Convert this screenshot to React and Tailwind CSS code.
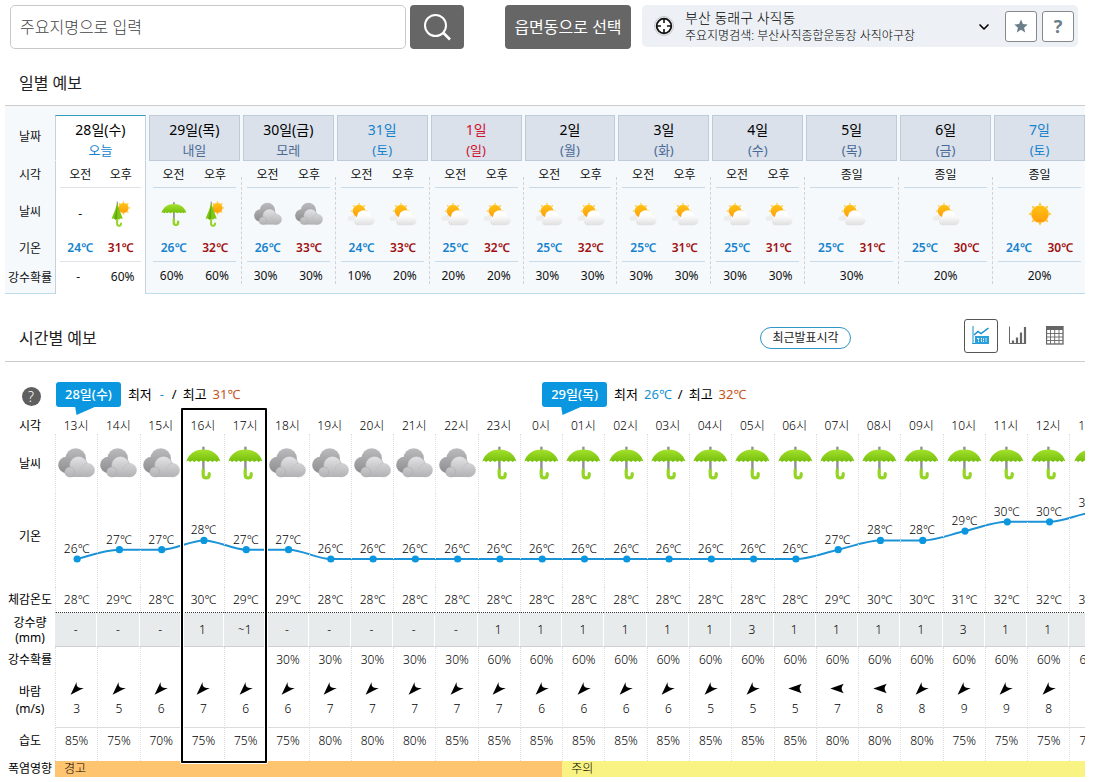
import { useState } from 'react'
import clsx from 'clsx'
import { ChevronDown } from 'lucide-react'

const days = [
  { date: '28일(수)', sub: '오늘', today: true, icons: [null, 'umbrellaSun'], temps: [24, 31], rain: ['-', '60%'] },
  { date: '29일(목)', sub: '내일', icons: ['umbrella', 'umbrellaSun'], temps: [26, 32], rain: ['60%', '60%'] },
  { date: '30일(금)', sub: '모레', icons: ['cloud', 'cloud'], temps: [26, 33], rain: ['30%', '30%'] },
  { date: '31일', sub: '(토)', tone: 'sat', icons: ['partly', 'partly'], temps: [24, 33], rain: ['10%', '20%'] },
  { date: '1일', sub: '(일)', tone: 'sun', icons: ['partly', 'partly'], temps: [25, 32], rain: ['20%', '20%'] },
  { date: '2일', sub: '(월)', icons: ['partly', 'partly'], temps: [25, 32], rain: ['30%', '30%'] },
  { date: '3일', sub: '(화)', icons: ['partly', 'partly'], temps: [25, 31], rain: ['30%', '30%'] },
  { date: '4일', sub: '(수)', icons: ['partly', 'partly'], temps: [25, 31], rain: ['30%', '30%'] },
  { date: '5일', sub: '(목)', icons: ['partly'], temps: [25, 31], rain: ['30%'] },
  { date: '6일', sub: '(금)', icons: ['partly'], temps: [25, 30], rain: ['20%'] },
  { date: '7일', sub: '(토)', tone: 'sat', icons: ['sun'], temps: [24, 30], rain: ['20%'] },
]

// hour, icon, temp, feels like, rain (mm), rain chance, wind direction, wind speed, humidity
const hours = [
  ['13', 'cloud', 26, 28, '-', '', 'sw', 3, 85],
  ['14', 'cloud', 27, 29, '-', '', 'sw', 5, 75],
  ['15', 'cloud', 27, 28, '-', '', 'sw', 6, 70],
  ['16', 'umbrella', 28, 30, '1', '', 'sw', 7, 75],
  ['17', 'umbrella', 27, 29, '~1', '', 'sw', 6, 75],
  ['18', 'cloud', 27, 29, '-', '30%', 'sw', 6, 75],
  ['19', 'cloud', 26, 28, '-', '30%', 'sw', 7, 80],
  ['20', 'cloud', 26, 28, '-', '30%', 'sw', 7, 80],
  ['21', 'cloud', 26, 28, '-', '30%', 'sw', 7, 80],
  ['22', 'cloud', 26, 28, '-', '30%', 'sw', 7, 85],
  ['23', 'umbrella', 26, 28, '1', '60%', 'sw', 7, 85],
  ['0', 'umbrella', 26, 28, '1', '60%', 'sw', 6, 85],
  ['01', 'umbrella', 26, 28, '1', '60%', 'sw', 6, 85],
  ['02', 'umbrella', 26, 28, '1', '60%', 'sw', 6, 85],
  ['03', 'umbrella', 26, 28, '1', '60%', 'sw', 6, 85],
  ['04', 'umbrella', 26, 28, '1', '60%', 'sw', 5, 85],
  ['05', 'umbrella', 26, 28, '3', '60%', 'sw', 5, 85],
  ['06', 'umbrella', 26, 28, '1', '60%', 'w', 5, 85],
  ['07', 'umbrella', 27, 29, '1', '60%', 'w', 7, 80],
  ['08', 'umbrella', 28, 30, '1', '60%', 'w', 8, 80],
  ['09', 'umbrella', 28, 30, '1', '60%', 'sw', 8, 80],
  ['10', 'umbrella', 29, 31, '3', '60%', 'sw', 9, 75],
  ['11', 'umbrella', 30, 32, '1', '60%', 'sw', 9, 75],
  ['12', 'umbrella', 30, 32, '1', '60%', 'sw', 8, 75],
  ['13', 'umbrella', 31, 33, '1', '60%', '', '', 75],
].map(([hour, icon, temp, feels, mm, chance, dir, wind, humidity]) => ({
  hour, icon, temp, feels, mm, chance, dir, wind, humidity,
}))

const CHART_W = 1057
const CHART_H = 93
const tempY = (t) => 65 - (t - 26) * 9.3

const points = hours.map((h, i) => ({ x: ((i + 0.5) * CHART_W) / hours.length, y: tempY(h.temp) }))

// monotone cubic through the hourly points
const linePath = (() => {
  const step = CHART_W / hours.length
  const slopes = points.slice(1).map((p, i) => p.y - points[i].y)
  const tangents = points.map((_, i) => {
    if (i === 0) return slopes[0] * 1.2
    if (i === points.length - 1) return slopes[i - 1] * 0.5
    return slopes[i - 1] * slopes[i] <= 0 ? 0 : (slopes[i - 1] + slopes[i]) / 2
  })
  return points.reduce((d, p, i) => {
    if (i === 0) return `M${p.x} ${p.y}`
    const prev = points[i - 1]
    return `${d} C${prev.x + step / 3} ${prev.y + tangents[i - 1] / 3} ${p.x - step / 3} ${p.y - tangents[i] / 3} ${p.x} ${p.y}`
  }, '')
})()

const RAYS = [0, 45, 90, 135, 180, 225, 270, 315]

function Gradients() {
  return (
    <svg className="absolute w-0 h-0" aria-hidden="true">
      <defs>
        <linearGradient id="cloudBack" gradientUnits="userSpaceOnUse" x1="0" y1="0" x2="0" y2="26">
          <stop offset="0" stopColor="#bcbcbe" />
          <stop offset="1" stopColor="#8c8c8f" />
        </linearGradient>
        <linearGradient id="cloudFront" gradientUnits="userSpaceOnUse" x1="0" y1="8" x2="0" y2="29">
          <stop offset="0" stopColor="#e4e4e6" />
          <stop offset="1" stopColor="#b2b2b4" />
        </linearGradient>
        <linearGradient id="cloudWhite" gradientUnits="userSpaceOnUse" x1="0" y1="8" x2="0" y2="23">
          <stop offset="0.3" stopColor="#ffffff" />
          <stop offset="1" stopColor="#dedede" />
        </linearGradient>
        <linearGradient id="canopy" x1="0" y1="0" x2="0" y2="1">
          <stop offset="0" stopColor="#a4e22c" />
          <stop offset="1" stopColor="#74bd0c" />
        </linearGradient>
        <linearGradient id="sunDisc" x1="0" y1="0" x2="0" y2="1">
          <stop offset="0" stopColor="#ffc416" />
          <stop offset="1" stopColor="#ff9d0a" />
        </linearGradient>
      </defs>
    </svg>
  )
}

function SunShape({ cx, cy, r, ray }) {
  return (
    <g>
      {RAYS.map((a) => (
        <path
          key={a}
          d={`M${cx - ray} ${cy - r - 0.2} L${cx} ${cy - r - ray * 2} L${cx + ray} ${cy - r - 0.2} Z`}
          fill="#ffc93a"
          transform={`rotate(${a} ${cx} ${cy})`}
        />
      ))}
      <circle cx={cx} cy={cy} r={r} fill="url(#sunDisc)" />
    </g>
  )
}

function CloudIcon({ className }) {
  return (
    <svg viewBox="0 0 37 30" className={className} role="img" aria-label="흐림">
      <g fill="url(#cloudBack)">
        <circle cx="8.4" cy="17" r="8.2" />
        <circle cx="17.7" cy="10.4" r="10.2" />
      </g>
      <g fill="url(#cloudFront)">
        <circle cx="20.5" cy="17.3" r="9" stroke="#a6a6a9" strokeWidth="0.5" />
        <circle cx="29.7" cy="22.2" r="6.8" stroke="#b4b4b6" strokeWidth="0.4" />
        <path d="M12 22 H30 V29 H12 Z" />
        <circle cx="11.7" cy="24" r="5" stroke="#a6a6a9" strokeWidth="0.5" />
      </g>
    </svg>
  )
}

function UmbrellaIcon({ className }) {
  return (
    <svg viewBox="0 0 35 33" className={className} role="img" aria-label="비">
      <path d="M17.4 0.2 V24" stroke="#8f9094" strokeWidth="2.4" />
      <path
        d="M0.3 15 C2.5 7.5 9 2.9 17.4 2.9 C25.8 2.9 32.3 7.5 34.5 15 L32.6 14 L30.7 15.4 L28.6 14 L26.5 15.4 L24.2 14 L22 15.6 L19.7 14 L17.4 15.6 L15.1 14 L12.8 15.6 L10.6 14 L8.3 15.4 L6.2 14 L4.1 15.4 L2.2 14 Z"
        fill="url(#canopy)"
      />
      <path d="M17.2 23.5 V28.5 C17.2 32.4 23.2 32.4 23.2 28.5 V27" fill="none" stroke="#93d424" strokeWidth="3.2" strokeLinecap="round" />
    </svg>
  )
}

function UmbrellaSunIcon({ className }) {
  return (
    <svg viewBox="0 0 19 26" className={className} role="img" aria-label="흐리고 한때 비">
      <SunShape cx={12} cy={6.9} r={5} ray={1.1} />
      <path d="M5.7 0.6 V21" stroke="#8f9094" strokeWidth="1.1" />
      <path d="M5.7 2.3 C4.3 7.5 2 13 0.1 17.8 L2.4 17.4 L4 18.8 L5.7 17.4 L7.5 18.8 L9 17.4 L11.3 17.8 C9.6 13 7.4 7.5 5.7 2.3 Z" fill="#7fc714" />
      <path d="M5.7 2.3 C4.9 8 4.2 13 2.8 17.7 L4 18.8 L5.7 17.4 Z" fill="#5fa90d" />
      <path d="M5.6 19 V22.5 C5.6 25.6 9.6 25.6 9.6 22.5" fill="none" stroke="#93d424" strokeWidth="2" strokeLinecap="round" />
    </svg>
  )
}

function PartlyIcon({ className }) {
  return (
    <svg viewBox="0 0 28 23" className={className} role="img" aria-label="구름많음">
      <SunShape cx={12} cy={8.6} r={6.3} ray={1.2} />
      <g fill="#ededed">
        <circle cx="6" cy="15" r="2.6" />
        <circle cx="2.8" cy="16" r="2.2" />
        <path d="M2.8 15 H9 V18.2 H2.8 Z" />
      </g>
      <g fill="url(#cloudWhite)">
        <circle cx="16.7" cy="14.6" r="6.8" />
        <circle cx="22.6" cy="17.8" r="4.9" />
        <path d="M10.5 17 H22.6 V22.7 H10.5 Z" />
        <circle cx="10.7" cy="19" r="3.7" />
      </g>
    </svg>
  )
}

function SunIcon({ className }) {
  return (
    <svg viewBox="0 0 24 24" className={className} role="img" aria-label="맑음">
      <SunShape cx={12} cy={12} r={8.8} ray={1.5} />
    </svg>
  )
}

const dailyIcons = {
  cloud: <CloudIcon className="w-7 h-6" />,
  umbrella: <UmbrellaIcon className="w-[26px] h-6" />,
  umbrellaSun: <UmbrellaSunIcon className="w-5 h-[26px]" />,
  partly: <PartlyIcon className="w-7 h-6" />,
  sun: <SunIcon className="w-6 h-6" />,
}

const hourlyIcons = {
  cloud: <CloudIcon className="w-[37px] h-[30px] mx-auto" />,
  umbrella: <UmbrellaIcon className="w-[35px] h-[34px] mx-auto" />,
}

function WindArrow({ dir }) {
  return (
    <svg viewBox="0 0 14 13" className="w-[14px] h-[13px]" aria-hidden="true">
      {dir === 'sw' && <path d="M0.6 12.8 L6.6 0 C6.4 2.6 6.8 4.2 8 5 C9 5.8 11 6.2 13.8 6 Z" fill="#000" />}
      {dir === 'w' && <path d="M0.3 6.5 L13.8 1.8 C12.2 4 11.7 5.3 11.7 6.5 C11.7 7.7 12.2 9 13.8 11.2 Z" fill="#000" />}
    </svg>
  )
}

function SearchBar() {
  return (
    <header className="flex items-start pt-[5px] pl-[10px] pr-[23px]">
      <input
        type="text"
        aria-label="주요지명으로 입력"
        placeholder="주요지명으로 입력"
        className="flex-1 min-w-0 h-11 rounded-[5px] border border-[#c9c9c9] px-[9px] text-base font-light text-[#333] placeholder:text-[#444]"
      />
      <button aria-label="검색" className="ml-1 w-[54px] h-11 rounded-sm bg-[#666] flex items-center justify-center">
        <svg viewBox="0 0 30 30" className="w-[30px] h-[30px]" fill="none" stroke="#fff">
          <circle cx="13.5" cy="13.5" r="10.5" strokeWidth="2" />
          <path d="M21.5 21 L28 27.5" strokeWidth="2.6" />
        </svg>
      </button>
      <button className="ml-[41px] w-[126px] h-11 rounded-sm bg-[#666] text-base text-white whitespace-nowrap">
        읍면동으로 선택
      </button>
      <div className="ml-[11px] w-[436px] h-[42px] rounded-[5px] bg-[#edf0f5] flex items-center pl-[11px] pr-1">
        <svg viewBox="0 0 22 22" className="w-[22px] h-[22px] shrink-0" fill="none">
          <circle cx="11" cy="11" r="9.5" stroke="#c4c8cc" />
          <circle cx="11" cy="11" r="7.3" stroke="#111" strokeWidth="1.8" fill="#fff" />
          <path d="M11 3 V8 M11 14 V19 M3 11 H8 M14 11 H19" stroke="#111" strokeWidth="1.6" />
        </svg>
        <button className="flex-1 flex items-center justify-between ml-[10px] mr-[13px] pt-px text-left text-black">
          <span className="font-light">
            <span className="block text-sm leading-[19px]">부산 동래구 사직동</span>
            <span className="block text-xs leading-[18px]">주요지명검색: 부산사직종합운동장 사직야구장</span>
          </span>
          <ChevronDown className="w-4 h-4 text-black" strokeWidth={2.5} />
        </button>
        <button aria-label="즐겨찾기" className="w-8 h-[31px] rounded-[3px] border border-[#888] bg-white flex items-center justify-center">
          <svg viewBox="0 0 24 24" className="w-[14px] h-[14px]" fill="#6b7f8a">
            <path d="M12 1 L15.3 8.7 L23.5 9.4 L17.3 14.8 L19.2 23 L12 18.6 L4.8 23 L6.7 14.8 L0.5 9.4 L8.7 8.7 Z" />
          </svg>
        </button>
        <button aria-label="도움말" className="ml-[5px] w-8 h-[31px] rounded-[3px] border border-[#888] bg-white text-lg leading-none font-bold text-[#6b7f8a]">
          ?
        </button>
      </div>
    </header>
  )
}

function DailyTable() {
  const lastCell = (day) => (day.today ? 'bg-white' : 'border-b border-b-[#bddcec]')
  const sideBorder = (day, i, span) =>
    clsx(day.today && 'bg-white border-[#c5d2de]', day.today && i === 0 && 'border-l', day.today && (i === 1 || span === 2) && 'border-r')
  const pad = (i, span) => (span === 2 ? 'px-1' : i === 0 ? 'pl-1' : 'pr-1')
  const rule = (day) => (day.today ? 'border-[#e0e4e8]' : 'border-[#c9dbe9]')
  const gap = (key) => <td key={key} />

  return (
    <div className="border-t border-[#ccc] bg-[#f5f9fc] pt-[9px]">
      <table className="w-full table-fixed border-separate border-spacing-0 text-xs leading-4 text-center text-[#111]">
        <colgroup>
          <col className="w-[50px]" />
          {days.flatMap((d, i) => [
            i > 0 && <col key={`${d.date}g`} className="w-[3px]" />,
            <col key={`${d.date}a`} />,
            <col key={`${d.date}p`} />,
          ])}
        </colgroup>
        <thead>
          <tr className="h-[46px]">
            <th scope="row" className="p-0 pb-[3px] font-normal">날짜</th>
            {days.flatMap((d, i) => [
              i > 0 && gap(`${d.date}g`),
              <th
                key={d.date}
                scope="col"
                colSpan={2}
                className={clsx(
                  'p-0 pt-[3px] align-middle font-normal border',
                  d.today ? 'bg-white border-[#c5d2de] border-t-[#2f9fc0] border-b-white' : 'bg-[#dae1ea] border-[#bfcbd9]',
                )}
              >
                <span className={clsx('block text-sm leading-5', d.tone === 'sat' ? 'text-[#1683cc]' : d.tone === 'sun' ? 'text-[#cf1130]' : 'text-black')}>
                  {d.date}
                </span>
                <span
                  className={clsx(
                    'block text-[13px] leading-5',
                    d.today || d.tone === 'sat' ? 'text-[#1683cc]' : d.tone === 'sun' ? 'text-[#cf1130]' : 'text-[#4a6a96]',
                  )}
                >
                  {d.sub}
                </span>
              </th>,
            ])}
          </tr>
        </thead>
        <tbody>
          <tr className="h-[27px]">
            <th scope="row" className="p-0 font-normal">시각</th>
            {days.flatMap((d, n) => {
              const labels = d.icons.length === 2 ? ['오전', '오후'] : ['종일']
              const span = labels.length === 2 ? 1 : 2
              return [
                n > 0 && (
                  <td key={`${d.date}g`} rowSpan={4} className="p-0 pt-4 align-top border-b border-[#bddcec]">
                    {n > 1 && <div className="w-px h-[107px] mx-auto border-l border-dashed border-[#cfd3d8]" />}
                  </td>
                ),
                ...labels.map((label, i) => (
                  <td key={d.date + label} colSpan={span} className={clsx('p-0', pad(i, span), sideBorder(d, i, span))}>
                    <div className={clsx('h-[27px] pt-[6px] border-b', rule(d))}>{label}</div>
                  </td>
                )),
              ]
            })}
          </tr>
          <tr className="h-12">
            <th scope="row" className="p-0 font-normal">날씨</th>
            {days.flatMap((d) => {
              const span = d.icons.length === 2 ? 1 : 2
              return d.icons.map((icon, i) => (
                <td key={d.date + i} colSpan={span} className={clsx('p-0', pad(i, span), sideBorder(d, i, span))}>
                  <div className="flex justify-center pt-[3px]">{icon ? dailyIcons[icon] : '-'}</div>
                </td>
              ))
            })}
          </tr>
          <tr className="h-[26px]">
            <th scope="row" className="p-0 font-normal">기온</th>
            {days.flatMap((d) =>
              d.temps.map((t, i) => (
                <td key={d.date + i} className={clsx('p-0', pad(i, 1), sideBorder(d, i, 1))}>
                  <div className={clsx('h-[26px] pt-1 border-b font-semibold', rule(d), i === 0 ? 'text-[#1683cc]' : 'text-[#a01010]')}>
                    {t}℃
                  </div>
                </td>
              )),
            )}
          </tr>
          <tr className="h-8">
            <th scope="row" className="p-0 font-normal border-b border-[#bddcec] whitespace-nowrap">강수확률</th>
            {days.flatMap((d) => {
              const span = d.rain.length === 2 ? 1 : 2
              return d.rain.map((r, i) => (
                <td key={d.date + i} colSpan={span} className={clsx('p-0 pb-[3px]', sideBorder(d, i, span), lastCell(d))}>
                  {r}
                </td>
              ))
            })}
          </tr>
        </tbody>
      </table>
    </div>
  )
}

function ViewToggle() {
  const [view, setView] = useState('graph')
  const views = [
    {
      id: 'graph',
      label: '그래프',
      icon: (
        <svg viewBox="0 0 18 19" className="w-[18px] h-[19px]" fill="none">
          <path d="M1 0 V18 M0.5 17.5 H17" stroke="#168fd0" />
          <path d="M2 9 L6 5.5 L9 7.5 L16.5 2" stroke="#168fd0" strokeWidth="1.5" />
          <rect x="3" y="10" width="14" height="8" fill="#2a9fda" />
          <path d="M5 12.5 H7.5 M6.5 12.5 V16 M9.5 12 V16 M11.5 12.5 V16 M14 12 V16" stroke="#fff" strokeDasharray="1.5 0.7" />
        </svg>
      ),
    },
    {
      id: 'bar',
      label: '막대',
      icon: (
        <svg viewBox="0 0 18 19" className="w-[18px] h-[19px]" fill="none" stroke="#666">
          <path d="M0.5 0.5 V17.5 H17" />
          <path d="M4 18 V14.5 M8 18 V11.5 M12 18 V6.5 M16 18 V1" strokeWidth="2.2" />
        </svg>
      ),
    },
    {
      id: 'table',
      label: '표',
      icon: (
        <svg viewBox="0 0 18 19" className="w-[18px] h-[19px]" fill="none" stroke="#666">
          <rect x="0.5" y="0.5" width="16.5" height="17.5" strokeWidth="1.3" />
          <path d="M0 2.5 H17" strokeWidth="3" />
          <path d="M4.5 4 V18 M8.7 4 V18 M13 4 V18 M1 7.5 H17 M1 11 H17 M1 14.5 H17" strokeWidth="0.9" />
        </svg>
      ),
    },
  ]
  return (
    <div className="flex gap-[3px] mr-[13px]">
      {views.map((v) => (
        <button
          key={v.id}
          aria-label={v.label}
          aria-pressed={view === v.id}
          onClick={() => setView(v.id)}
          className={clsx('w-[34px] h-[34px] rounded-[3px] border flex items-center justify-center', view === v.id ? 'border-[#555]' : 'border-transparent')}
        >
          {v.icon}
        </button>
      ))}
    </div>
  )
}

function DayFlag({ label, min, max, className }) {
  return (
    <div className={clsx('flex items-start text-[13px] leading-[25px] whitespace-pre', className)}>
      <span className="relative px-[9px] rounded-[3px] bg-[#0a97e0] font-medium text-white">
        {label}
        <svg viewBox="0 0 22 9" className="absolute left-[19px] top-6 w-[22px] h-[9px]">
          <path d="M0 0 H22 L1.5 9 Z" fill="#0a97e0" />
        </svg>
      </span>
      <span className="flex gap-[6px] ml-[7px]">
        <span>최저</span>
        <span className="min-w-2 text-center text-[#1790d2]">{min}</span>
        <span>/</span>
        <span>최고</span>
        <span className="text-[#c4551b]">{max}</span>
      </span>
    </div>
  )
}

function HourlyTable() {
  const cell = 'p-0 border-l border-dotted border-[#dedede]'
  const head = 'p-0 font-normal whitespace-nowrap'

  return (
    <div className="relative overflow-x-auto overflow-y-hidden [scrollbar-width:none] pt-4">
      <table className="w-[1107px] table-fixed border-separate border-spacing-0 text-xs leading-4 text-center font-light text-black">
        <colgroup>
          <col className="w-[50px]" />
          {hours.map((h, i) => <col key={i} />)}
        </colgroup>
        <thead>
          <tr className="h-10">
            <td className="p-0 pb-[3px]">
              <button aria-label="도움말" className="w-[19px] h-[19px] ml-[2px] rounded-full bg-[#5f5f5f] text-sm leading-none text-white">?</button>
            </td>
            <th scope="colgroup" colSpan={12} className="p-0 pt-1 align-top font-normal">
              <DayFlag label="28일(수)" min="-" max="31℃" className="ml-px" />
            </th>
            <th scope="colgroup" colSpan={13} className="p-0 pt-1 align-top font-normal">
              <DayFlag label="29일(목)" min="26℃" max="32℃" className="-ml-5" />
            </th>
          </tr>
          <tr className="h-4">
            <th scope="row" className={head}>시각</th>
            {hours.map((h, i) => (
              <th key={i} scope="col" className="p-0 font-light">{h.hour}시</th>
            ))}
          </tr>
        </thead>
        <tbody>
          <tr className="h-[60px]">
            <th scope="row" className={head}>날씨</th>
            {hours.map((h, i) => (
              <td key={i} className={clsx(cell, 'pb-[2px]')}>{hourlyIcons[h.icon]}</td>
            ))}
          </tr>
          <tr className="h-[93px]">
            <th scope="row" className={clsx(head, 'pb-2')}>기온</th>
            {hours.map((h, i) => (
              <td key={i} className={clsx(cell, 'relative align-top')}>
                {i === 0 && (
                  <svg viewBox={`0 0 ${CHART_W} ${CHART_H}`} width={CHART_W} height={CHART_H} className="absolute left-0 top-0 max-w-none">
                    <path d={linePath} fill="none" stroke="#1b93d6" strokeWidth="2" />
                    {points.map((p) => <circle key={p.x} cx={p.x} cy={p.y} r="3.6" fill="#0a97e0" />)}
                  </svg>
                )}
                <div style={{ paddingTop: Math.round(tempY(h.temp)) - 18 }}>{h.temp}℃</div>
              </td>
            ))}
          </tr>
          <tr className="h-[26px]">
            <th scope="row" className={head}>체감온도</th>
            {hours.map((h, i) => (
              <td key={i} className={clsx(cell, 'border-b border-b-[#333]')}>{h.feels}℃</td>
            ))}
          </tr>
          <tr className="h-[34px]">
            <th scope="row" className={clsx(head, 'leading-[15px]')}>강수량<br />(mm)</th>
            {hours.map((h, i) => (
              <td key={i} className="p-0 border-r border-r-white border-b border-b-[#cfcfcf] bg-[#e8ebec]">{h.mm}</td>
            ))}
          </tr>
          <tr className="h-[26px]">
            <th scope="row" className={head}>강수확률</th>
            {hours.map((h, i) => <td key={i} className={cell}>{h.chance}</td>)}
          </tr>
          <tr className="h-[55px]">
            <th scope="row" className={clsx(head, 'leading-[17px] pb-[2px]')}>바람<br />(m/s)</th>
            {hours.map((h, i) => (
              <td key={i} className="p-0 pb-px border-l border-l-[#dedede] [border-left-style:dotted] border-b border-b-[#dcdcdc]">
                <div className="flex flex-col items-center gap-[6px]">
                  <WindArrow dir={h.dir} />
                  <span className="h-4">{h.wind}</span>
                </div>
              </td>
            ))}
          </tr>
          <tr className="h-[33px]">
            <th scope="row" className={clsx(head, 'pb-[7px]')}>습도</th>
            {hours.map((h, i) => <td key={i} className={clsx(cell, 'pb-[7px]')}>{h.humidity}%</td>)}
          </tr>
          <tr className="h-4">
            <th scope="row" className={head}>폭염영향</th>
            <td colSpan={12} className="p-0 pl-[9px] text-left bg-[#fec46f]">경고</td>
            <td colSpan={13} className="p-0 pl-[9px] text-left bg-[#f9f383]">주의</td>
          </tr>
        </tbody>
      </table>
      {/* highlighted hours, 16시 - 17시 */}
      <div className="absolute left-[176px] top-[46px] w-[86px] h-[355px] border-2 border-black rounded-[1px] shadow-[0_0_0_1px_#fff,inset_0_0_0_1px_#fff] pointer-events-none" />
    </div>
  )
}

export default function App() {
  return (
    <div className="bg-white text-[#111] font-['Noto_Sans','Noto_Sans_CJK_KR',sans-serif]">
      <Gradients />
      <SearchBar />
      <main className="pl-[5px] pr-4">
        <section>
          <h2 className="h-14 pt-3 pl-[14px] flex items-center text-base text-[#222]">일별 예보</h2>
          <DailyTable />
        </section>
        <section>
          <div className="flex items-center h-[67px] pt-4 pl-[14px]">
            <h2 className="text-base text-[#222] pt-1">시간별 예보</h2>
            <button className="ml-auto mr-[113px] mt-1 w-[91px] h-[22px] rounded-full border border-[#2f96c6] text-xs leading-none text-[#222] whitespace-nowrap">
              최근발표시각
            </button>
            <ViewToggle />
          </div>
          <div className="border-t border-[#ccc]">
            <HourlyTable />
          </div>
        </section>
      </main>
    </div>
  )
}
